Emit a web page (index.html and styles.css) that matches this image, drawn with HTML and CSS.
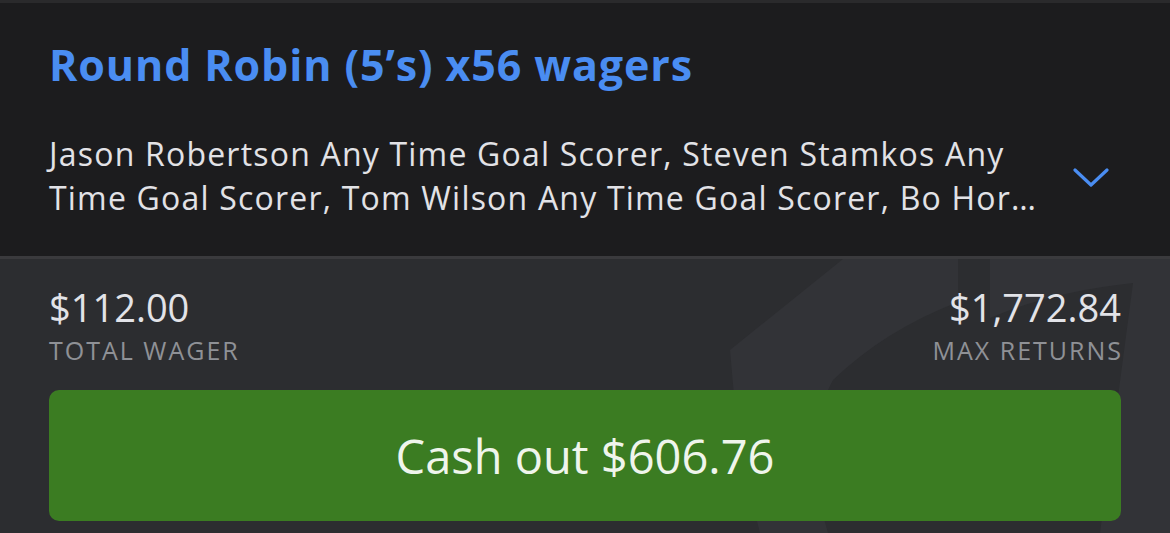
FILE: index.html
```html
<!DOCTYPE html>
<html lang="en">
<head>
<meta charset="utf-8">
<title>Round Robin</title>
<link rel="stylesheet" href="styles.css">
</head>
<body>
<div class="card">
  <section class="head">
    <h1 class="title">Round Robin (5’s) x56 wagers</h1>
    <div class="legs">
      <p class="legs-text">Jason Robertson Any Time Goal Scorer, Steven Stamkos Any Time Goal Scorer, Tom Wilson Any Time Goal Scorer, Bo Hor…</p>
      <div class="chev">
        <svg width="36" height="20" viewBox="0 0 36 20"><path d="M2 2 L18 17 L34 2" fill="none" stroke="#4a8df2" stroke-width="3.2" stroke-linecap="round" stroke-linejoin="round"/></svg>
      </div>
    </div>
  </section>
  <section class="foot">
    <svg class="mark" width="1170" height="274" viewBox="0 259 1170 274">
      <path d="M843 259 L958 259 L958 302 Q885 330 833 380 Q800 440 828 533 L760 533 Q736 440 730 350 Z" fill="#323337"/>
      <path d="M990 259 L1170 259 L1170 533 L1100 533 L1133 283 Q1050 292 990 318 Z" fill="#323337"/>
    </svg>
    <div class="stats">
      <div class="stat">
        <div class="amount">$112.00</div>
        <div class="label">TOTAL WAGER</div>
      </div>
      <div class="stat stat-right">
        <div class="amount">$1,772.84</div>
        <div class="label">MAX RETURNS</div>
      </div>
    </div>
    <button class="cashout">Cash out $606.76</button>
  </section>
</div>
</body>
</html>
```

FILE: styles.css
```css
* { box-sizing: border-box; }
html, body { margin: 0; padding: 0; }
body {
  background: #2c2d30;
  font-family: "Open Sans", "Lato", sans-serif;
  width: 1170px;
  height: 533px;
  overflow: hidden;
}
.card { width: 1170px; }
.head {
  background: #1c1c1e;
  border-top: 3px solid #2a2a2c;
  border-bottom: 3px solid #3a3a3d;
  padding: 34px 49px 0 49px;
  height: 259px;
}
.title {
  margin: 0;
  font-size: 43px;
  line-height: 56px;
  font-weight: 700;
  letter-spacing: 0.9px;
  color: #4a8df2;
}
.legs {
  margin-top: 39px;
  display: flex;
  align-items: center;
}
.legs-text {
  margin: 0;
  flex: 0 0 1005px;
  font-size: 32px;
  line-height: 44px;
  letter-spacing: 1.2px;
  color: #e2e2e6;
}
.chev {
  flex: 1;
  display: flex;
  justify-content: flex-end;
  padding-right: 12px;
  padding-top: 4px;
}
.foot {
  position: relative;
  height: 274px;
  padding: 22px 49px 12px 49px;
  display: flex;
  flex-direction: column;
}
.mark {
  position: absolute;
  left: 0;
  top: 0;
}
.stats {
  position: relative;
  display: flex;
  justify-content: space-between;
}
.stat-right { text-align: right; }
.amount {
  font-size: 38px;
  line-height: 52px;
  color: #e2e3e8;
}
.label {
  font-size: 25px;
  line-height: 34px;
  letter-spacing: 2px;
  color: #8f9196;
}
.stat-right .label { margin-right: -2px; }
.cashout {
  position: relative;
  margin-top: 23px;
  height: 131px;
  border: none;
  border-radius: 10px;
  background: #3b7c22;
  color: #eff5ec;
  font-family: "Open Sans", "Lato", sans-serif;
  font-size: 47px;
  font-weight: 400;
  display: flex;
  align-items: center;
  justify-content: center;
  padding: 0;
}
```
